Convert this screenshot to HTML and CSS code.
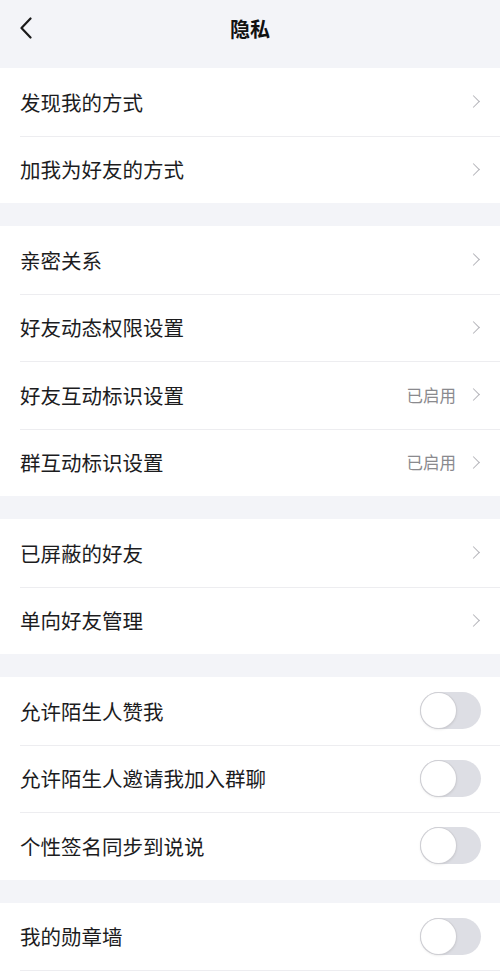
FILE: index.html
```html
<!DOCTYPE html>
<html lang="zh-CN">
<head>
  <meta charset="UTF-8" />
  <meta name="viewport" content="width=device-width, initial-scale=1" />
  <title>隐私</title>
  <link rel="stylesheet" href="styles.css">
</head>
<body>

  <div class="topbar">
    <svg class="back" width="14" height="22" viewBox="0 0 14 22">
      <path d="M11.5 1.5 L2.5 11 L11.5 20.5" fill="none" stroke="#1a1a1a" stroke-width="2.2" stroke-linecap="round" stroke-linejoin="round"/>
    </svg>
    <h1>隐私</h1>
  </div>

  <div class="group">
    <div class="row"><span class="label">发现我的方式</span><span class="arrow"></span></div>
    <div class="row"><span class="label">加我为好友的方式</span><span class="arrow"></span></div>
  </div>

  <div class="group">
    <div class="row"><span class="label">亲密关系</span><span class="arrow"></span></div>
    <div class="row"><span class="label">好友动态权限设置</span><span class="arrow"></span></div>
    <div class="row"><span class="label">好友互动标识设置</span><span class="value">已启用</span><span class="arrow"></span></div>
    <div class="row"><span class="label">群互动标识设置</span><span class="value">已启用</span><span class="arrow"></span></div>
  </div>

  <div class="group">
    <div class="row"><span class="label">已屏蔽的好友</span><span class="arrow"></span></div>
    <div class="row"><span class="label">单向好友管理</span><span class="arrow"></span></div>
  </div>

  <div class="group">
    <div class="row"><span class="label">允许陌生人赞我</span><span class="switch"></span></div>
    <div class="row"><span class="label">允许陌生人邀请我加入群聊</span><span class="switch"></span></div>
    <div class="row"><span class="label">个性签名同步到说说</span><span class="switch"></span></div>
  </div>

  <div class="group last">
    <div class="row"><span class="label">我的勋章墙</span><span class="switch"></span></div>
    <div class="row"></div>
  </div>

</body>
</html>
```

FILE: styles.css
```css
* {
  margin: 0; padding: 0; box-sizing: border-box;
  font-family: "Noto Sans CJK SC", "Noto Sans", sans-serif;
}

html, body {
  overflow: hidden;
}

body {
  background: #f3f4f8;
  width: 500px;
  height: 977px;
}

.topbar {
  height: 68px;
  display: flex;
  align-items: center;
  justify-content: center;
  position: relative;
  padding-bottom: 12px;
}

.back {
  position: absolute;
  left: 19px;
  top: 17px;
}

h1 {
  font-size: 20px;
  font-weight: 700;
  color: #111;
}

.group {
  background: #ffffff;
  margin-bottom: 23px;
}

.group.last {
  height: 74px;
  overflow: hidden;
  margin-bottom: 0;
}

.row {
  height: 67.5px;
  display: flex;
  align-items: center;
  padding: 0 19px 0 20px;
  position: relative;
}

.row + .row::before {
  content: "";
  position: absolute;
  left: 20px;
  right: 0;
  top: 0;
  border-top: 1px solid #ededf0;
}

.label {
  flex: 1;
  font-size: 20.5px;
  color: #1c1c1e;
}

.value {
  font-size: 16.5px;
  color: #8a8a8e;
  margin-right: 13px;
}

.arrow {
  width: 9px;
  height: 9px;
  border-top: 1.6px solid #b4b4ba;
  border-right: 1.6px solid #b4b4ba;
  transform: rotate(45deg);
  margin-right: 3px;
}

.switch {
  width: 61px;
  height: 37px;
  border-radius: 19px;
  background: #dddee4;
  position: relative;
}

.switch::after {
  content: "";
  position: absolute;
  left: 1px;
  top: 1px;
  width: 35px;
  height: 35px;
  border-radius: 50%;
  background: #fff;
  box-shadow: 0 0 0 1px #cfcfd4, 0 1px 3px rgba(0, 0, 0, 0.15);
}
```
